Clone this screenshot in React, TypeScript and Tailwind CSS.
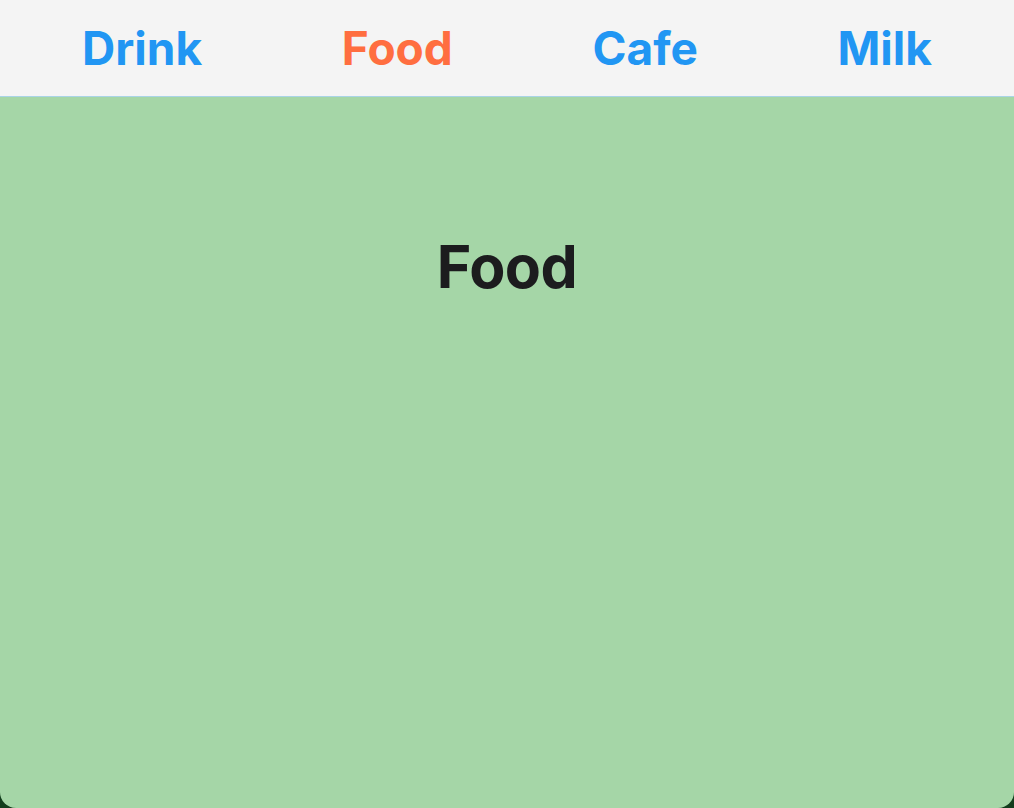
const tabs = ['Drink', 'Food', 'Cafe', 'Milk'];

export default function App() {
    const active = 'Food';

    return (
        <div className="h-[808px] w-full bg-[#123d1c]" style={{fontFamily: 'Inter, "Noto Sans", sans-serif'}}>
            <div className="h-full flex flex-col rounded-b-[16px] overflow-hidden">
                <header className="h-[97px] shrink-0 bg-[#f4f4f4] border-b border-[#a9d4e6] flex items-center justify-between px-[82px]">
                    {tabs.map(t => (
                        <button
                            key={t}
                            className={`text-[46px] font-bold leading-none ${
                                t === active ? 'text-[#ff6e40]' : 'text-[#2196f3]'
                            }`}
                        >
                            {t}
                        </button>
                    ))}
                </header>
                <main className="flex-1 bg-[#a5d6a7] flex flex-col items-center pt-[140px]">
                    <h1 className="text-[59px] font-bold leading-none text-[#1c1c1e] tracking-[-0.5px]">{active}</h1>
                </main>
            </div>
        </div>
    );
}
